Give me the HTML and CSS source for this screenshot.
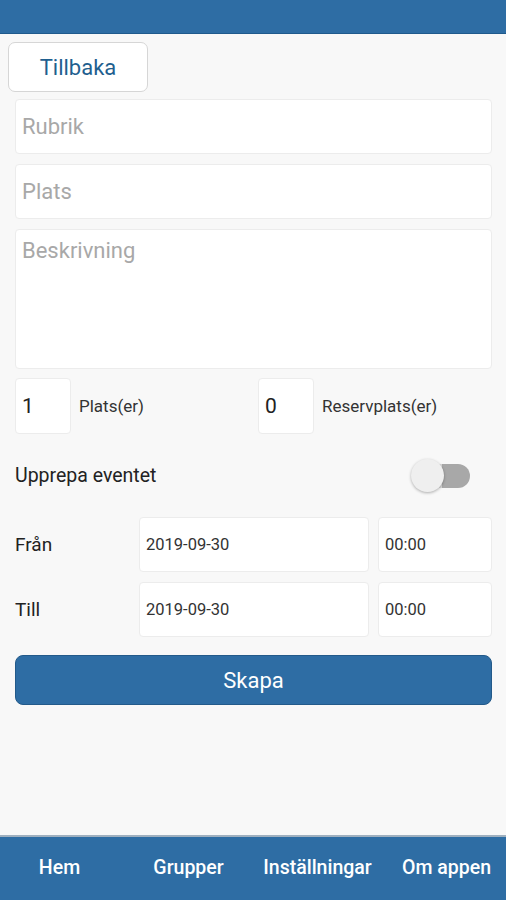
FILE: index.html
```html
<!DOCTYPE html>
<html lang="sv">
<head>
<meta charset="utf-8">
<title>Skapa event</title>
<link rel="stylesheet" href="styles.css">
</head>
<body>
<header class="topbar"></header>
<main class="content">
  <div class="back-row"><button class="back-btn">Tillbaka</button></div>
  <form class="form">
    <div class="field"><span class="placeholder">Rubrik</span></div>
    <div class="field"><span class="placeholder">Plats</span></div>
    <div class="field textarea"><span class="placeholder">Beskrivning</span></div>
    <div class="counts">
      <div class="count">
        <div class="num-box">1</div>
        <span class="count-label">Plats(er)</span>
      </div>
      <div class="count">
        <div class="num-box">0</div>
        <span class="count-label">Reservplats(er)</span>
      </div>
    </div>
    <div class="repeat-row">
      <span class="repeat-label">Upprepa eventet</span>
      <span class="toggle"><span class="knob"></span></span>
    </div>
    <div class="time-row">
      <span class="time-label">Från</span>
      <div class="field date">2019-09-30</div>
      <div class="field time">00:00</div>
    </div>
    <div class="time-row">
      <span class="time-label">Till</span>
      <div class="field date">2019-09-30</div>
      <div class="field time">00:00</div>
    </div>
    <button type="button" class="create-btn">Skapa</button>
  </form>
</main>
<nav class="bottom-nav">
  <span class="nav-item">Hem</span>
  <span class="nav-item">Grupper</span>
  <span class="nav-item">Inställningar</span>
  <span class="nav-item">Om appen</span>
</nav>
</body>
</html>
```
FILE: styles.css
```css
* { box-sizing: border-box; }
html, body { height: 100%; }
body {
  margin: 0;
  background: #f8f8f8;
  font-family: Roboto, "Liberation Sans", sans-serif;
  color: #222;
  display: flex;
  flex-direction: column;
}
.topbar {
  height: 34px;
  flex: none;
  background: #2e6da4;
  border-bottom: 1px solid #1f5a8c;
}
.content { flex: 1; }
.back-row { padding: 8px 0 0 8px; }
.back-btn {
  width: 140px;
  height: 50px;
  background: #fff;
  border: 1px solid #d6d6d6;
  border-radius: 7px;
  font-family: inherit;
  font-size: 22px;
  color: #1f5f8f;
  padding: 0;
}
.form {
  padding: 7px 14px 0 15px;
  display: flex;
  flex-direction: column;
}
.field {
  background: #fff;
  border: 1px solid #ececec;
  border-radius: 4px;
  height: 55px;
  display: flex;
  align-items: center;
  padding: 0 6px;
  margin-bottom: 10px;
  flex: none;
}
.placeholder { color: #a8a8a8; font-size: 22px; }
.field.textarea {
  height: 140px;
  align-items: flex-start;
  padding-top: 8px;
  margin-bottom: 9px;
}
.counts {
  display: flex;
  height: 56px;
}
.count {
  display: flex;
  align-items: center;
  width: 243px;
  flex: none;
}
.num-box {
  width: 56px;
  height: 56px;
  background: #fff;
  border: 1px solid #ececec;
  border-radius: 4px;
  display: flex;
  align-items: center;
  padding-left: 6px;
  font-size: 21px;
  color: #222;
  flex: none;
}
.count-label { margin-left: 8px; font-size: 17px; color: #333; }
.repeat-row {
  height: 83px;
  display: flex;
  align-items: center;
  justify-content: space-between;
  padding-right: 22px;
}
.repeat-label { font-size: 19.5px; color: #222; }
.toggle {
  position: relative;
  width: 57px;
  height: 24px;
  border-radius: 12px;
  background: linear-gradient(to right, #d9d9d9 50%, #a8a8a8 50%);
  display: block;
}
.knob {
  position: absolute;
  left: -2px;
  top: -5px;
  width: 33px;
  height: 33px;
  border-radius: 50%;
  background: #efefef;
  box-shadow: 0 1px 3px rgba(0,0,0,0.3);
}
.time-row {
  display: flex;
  align-items: center;
  gap: 9px;
}
.time-label {
  width: 115px;
  font-size: 19px;
  color: #222;
  margin-bottom: 10px;
}
.field.date {
  width: 230px;
  font-size: 16.5px;
  color: #333;
}
.field.time {
  flex: 1;
  font-size: 16.5px;
  color: #333;
}
.create-btn {
  margin-top: 8px;
  height: 50px;
  background: #2e6da4;
  border: 1px solid #235a8a;
  border-radius: 8px;
  color: #fff;
  font-family: inherit;
  font-size: 22px;
}
.bottom-nav {
  flex: none;
  height: 65px;
  background: #2e6da4;
  border-top: 2px solid #9fb0bf;
  display: grid;
  grid-template-columns: repeat(4, 119px);
  column-gap: 10px;
  align-items: center;
  padding-bottom: 2px;
}
.nav-item {
  text-align: center;
  white-space: nowrap;
  color: #fff;
  font-size: 19.5px;
  font-weight: 500;
}
```
